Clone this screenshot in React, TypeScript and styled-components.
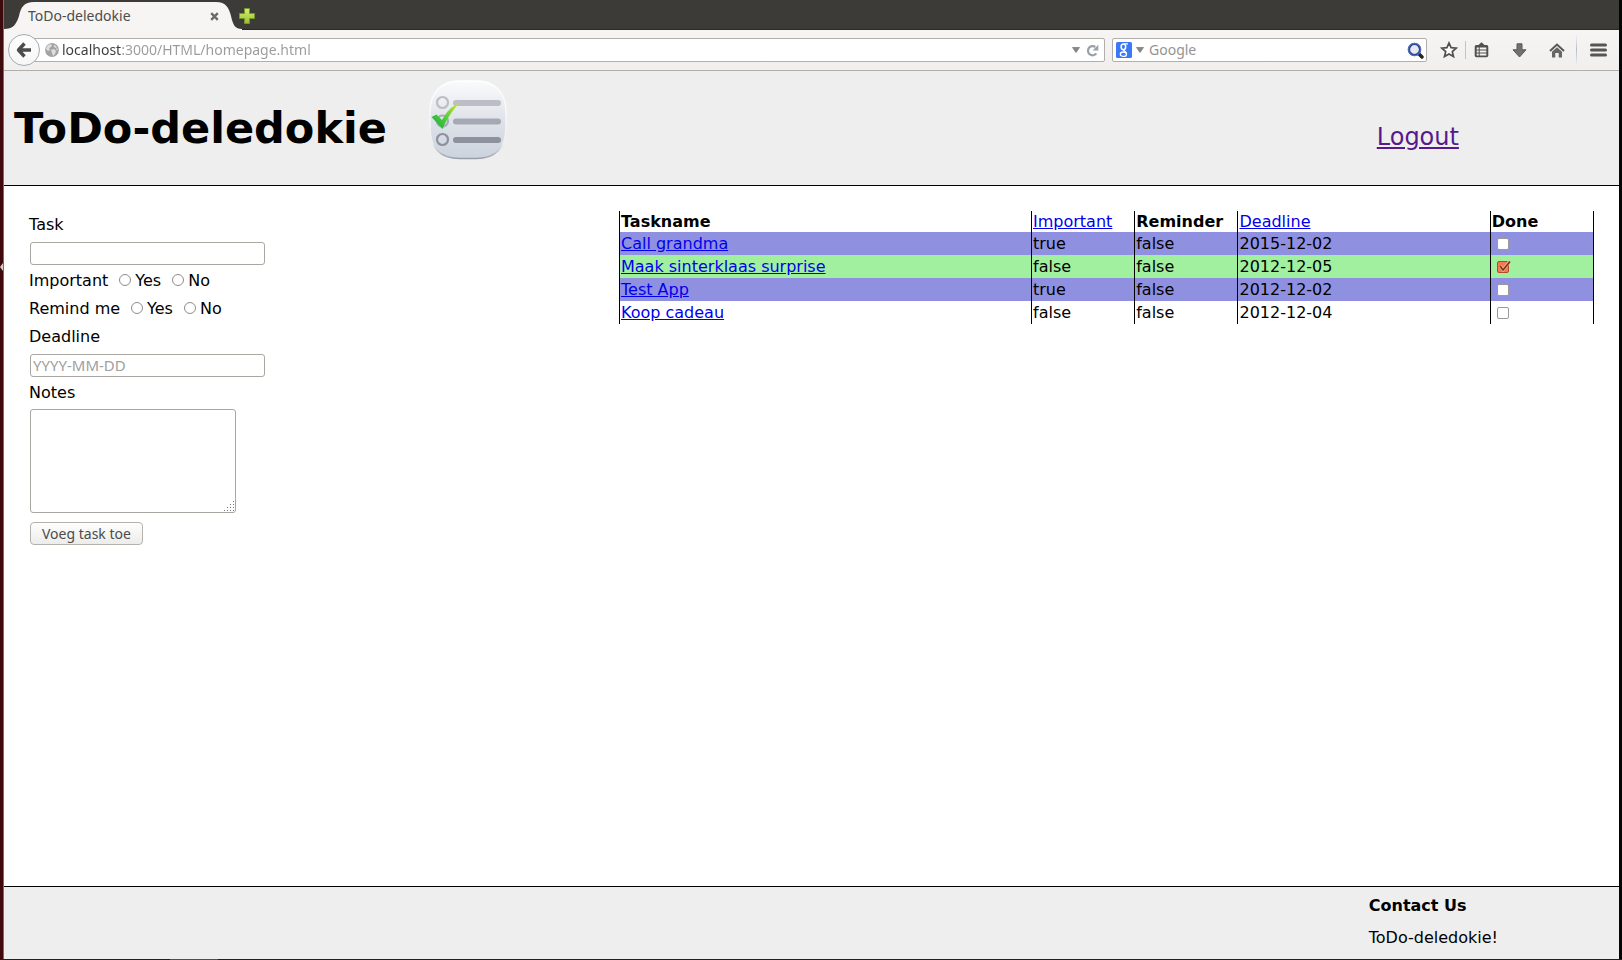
import React, { useState } from "react";
import styled, { createGlobalStyle } from "styled-components";

const GlobalStyle = createGlobalStyle`
  * { box-sizing: border-box; }
  body {
    margin: 0;
    background: #fff;
    color: #000;
    font: 16px/20px "DejaVu Sans", sans-serif;
  }
`;

const uiFont = `"Noto Sans", "Open Sans", sans-serif`;

const Desktop = styled.div`
  display: grid;
  grid-template-columns: 4px minmax(0, 1fr) 3px;
  grid-template-rows: minmax(0, 1fr) 1px;
  min-height: 100vh;
`;

const Launcher = styled.div`
  padding-top: 263px;
  background: #400a0c;
  border-right: 1px solid #a45a5c;

  svg { display: block; }
`;

const RightEdge = styled.div`
  background: #050505;
`;

const BottomEdge = styled.div`
  grid-column: 1 / -1;
  background: linear-gradient(90deg, #45100f 170px, #8a3a20 170px, #8a3a20 218px, #45100f 218px);
`;

const Browser = styled.div`
  display: flex;
  flex-direction: column;
  background: #fff;
`;

const TabBar = styled.div`
  display: flex;
  align-items: stretch;
  height: 30px;
  background: #3c3b37;
  box-shadow: inset 0 -1px #2a2926;
`;

const Tab = styled.div`
  position: relative;
  display: flex;
  align-items: center;
  justify-content: space-between;
  width: 238px;
  margin-right: -3px;
  padding: 2px 23px 0 24px;
  color: #4c4c4c;
  font: 14px/20px ${uiFont};
`;

const TabShape = styled.svg`
  position: absolute;
  inset: 0;
`;

const TabTitle = styled.span`
  position: relative;
`;

const IconButton = styled.button<{ $w: number; $h?: number }>`
  position: relative;
  display: flex;
  align-items: center;
  justify-content: center;
  flex: none;
  width: ${(p) => p.$w}px;
  height: ${(p) => p.$h ?? 24}px;
  padding: 0;
  border: 0;
  background: none;
`;

const Toolbar = styled.div`
  display: flex;
  align-items: center;
  height: 41px;
  padding: 0 0 0 4px;
  background: linear-gradient(#f6f5f4, #f0efed);
  border-bottom: 1px solid #b2aeaa;
`;

const BackButton = styled.button`
  position: relative;
  display: flex;
  align-items: center;
  justify-content: center;
  flex: none;
  width: 32px;
  height: 32px;
  margin-right: -8px;
  padding: 0;
  border: 1px solid #a4abb6;
  border-radius: 50%;
  background: linear-gradient(#fdfdfd, #f6f6f6);
`;

const UrlBox = styled.div`
  display: flex;
  align-items: center;
  flex: 1;
  height: 24px;
  padding: 0 4px 0 12px;
  border: 1px solid #b2aeaa;
  border-radius: 2px;
  background: #fff;
`;

const UrlInput = styled.input`
  flex: 1;
  min-width: 0;
  height: 20px;
  margin-left: 3px;
  padding: 0;
  border: 0;
  outline: 0;
  background: linear-gradient(90deg, #3c3c3c 60px, #9a9a9a 60px);
  background-clip: text;
  -webkit-text-fill-color: transparent;
  font: 14px/20px ${uiFont};
`;

const SearchBox = styled.div`
  display: flex;
  align-items: center;
  width: 315px;
  height: 24px;
  margin-left: 7px;
  padding: 0 2px 0 3px;
  border: 1px solid #b2aeaa;
  border-radius: 2px;
  background: #fff;
`;

const SearchInput = styled.input`
  flex: 1;
  min-width: 0;
  height: 20px;
  padding: 0 1px;
  border: 0;
  outline: 0;
  background: none;
  font: 14px/20px ${uiFont};

  &::placeholder { color: #949494; opacity: 1; }
`;

const Tools = styled.div`
  display: flex;
  align-items: center;
  margin-left: 10px;
`;

const Divider = styled.span<{ $tall?: boolean }>`
  width: 1px;
  height: ${(p) => (p.$tall ? 32 : 18)}px;
  margin-left: 4px;
  background: ${(p) =>
    p.$tall ? "linear-gradient(transparent, #b4bfcd, transparent)" : "#bcc6d1"};
`;

const Header = styled.header`
  position: relative;
  display: flex;
  align-items: center;
  height: 115px;
  padding: 0 10px;
  background: #eee;
  border-bottom: 1px solid #000;
`;

const Title = styled.h1`
  margin: 0;
  font-size: 43px;
  line-height: 52px;
`;

const Logo = styled.svg`
  flex: none;
  margin: 0 0 17px 42px;
`;

const LogoutSlot = styled.div`
  position: absolute;
  left: 85%;
  top: 51px;
  font-size: 24px;
  line-height: 30px;
`;

const Link = styled.a<{ $visited?: boolean }>`
  color: ${(p) => (p.$visited ? "#551a8b" : "#0000ee")};
`;

const Main = styled.main`
  display: grid;
  grid-template-columns: 590fr 975fr;
  align-items: start;
  flex: 1;
  padding: 25px;
`;

const Form = styled.form`
  display: flex;
  flex-direction: column;
  align-items: flex-start;
  line-height: 28px;
`;

const Row = styled.div`
  display: flex;
  align-items: center;
  height: 28px;
`;

const fieldFrame = `
  border: 1px solid #aaa6a1;
  border-radius: 3px;
  background: #fff;
  font: 15px/20px ${uiFont};
`;

const TextInput = styled.input`
  width: 235px;
  height: 23px;
  margin-left: 1px;
  padding: 0 2px;
  ${fieldFrame}

  &::placeholder { color: #a0a0a0; opacity: 1; }
`;

const Choice = styled.label`
  display: flex;
  align-items: center;
  margin-left: 11px;
`;

const Radio = styled.input`
  appearance: none;
  width: 12px;
  height: 12px;
  margin: 0 4px 2px 0;
  border: 1px solid #8f8d89;
  border-radius: 50%;
  background: #fff;

  &:checked { background: radial-gradient(#e2562b 3px, #fff 4px); }
`;

const NotesFrame = styled.div`
  position: relative;
  margin: 2px 0 9px 1px;
`;

const Notes = styled.textarea`
  display: block;
  width: 206px;
  height: 104px;
  padding: 2px;
  resize: none;
  ${fieldFrame}
`;

const Grip = styled.svg`
  position: absolute;
  right: 2px;
  bottom: 2px;
  pointer-events: none;
`;

const Submit = styled.button`
  height: 23px;
  margin-left: 1px;
  padding: 0 11px;
  border: 1px solid #b5b1ac;
  border-radius: 4px;
  background: linear-gradient(#fefefe, #ececeb);
  color: #4c4c4c;
  font: 14px/20px ${uiFont};
`;

const Table = styled.table`
  width: 100%;
  border-collapse: collapse;
  table-layout: fixed;
`;

const Col = styled.col<{ $share: number }>`
  width: ${(p) => p.$share}%;
`;

const HeadCell = styled.th<{ $plain?: boolean }>`
  height: 21px;
  padding: 0 1px;
  border: solid #000;
  border-width: 0 1px;
  text-align: left;
  font-weight: ${(p) => (p.$plain ? 400 : 700)};
`;

const TaskRow = styled.tr<{ $tone: string }>`
  background: ${(p) => p.$tone};
`;

const Cell = styled.td`
  height: 23px;
  padding: 0 1px;
  border: solid #000;
  border-width: 0 1px;
`;

const CheckFrame = styled.label`
  position: relative;
  display: block;
  width: 12px;
  height: 12px;
  margin-left: 5px;

  svg {
    position: absolute;
    left: 0;
    top: -1px;
    pointer-events: none;
  }
`;

const Checkbox = styled.input`
  appearance: none;
  display: block;
  width: 12px;
  height: 12px;
  margin: 0;
  border: 1px solid #9c9a96;
  border-radius: 2px;
  background: #fff;

  &:checked { border-color: #b54a26; background: #f7784c; }
`;

const Footer = styled.footer`
  height: 73px;
  padding: 9px 0 0 calc(85% - 8px);
  background: #eee;
  border-top: 1px solid #000;
`;

const FooterLine = styled.p<{ $strong?: boolean }>`
  margin: 0 0 12px;
  font-weight: ${(p) => (p.$strong ? 700 : 400)};
`;

const DownArrow = () => (
  <svg width="8" height="6" viewBox="0 0 8 6">
    <path d="M0.5 0.5h7L4 5.6z" fill="#888" stroke="#666" strokeWidth=".6" />
  </svg>
);

const BackIcon = () => (
  <svg width="16" height="16" viewBox="0 0 16 16">
    <path d="M8.5 1.5L2.5 8l6 6.500M3 8h12" fill="none" stroke="#4b4b4b" strokeWidth="3.400" strokeLinejoin="round" />
  </svg>
);

const GlobeIcon = () => (
  <svg width="14" height="14" viewBox="0 0 14 14">
    <circle cx="7" cy="7" r="6.900" fill="#a3a3a3" />
    <path d="M2 3l3-2 2 1-1 2-2 1 1 2-2 1-2-2zM9 1.500l3 2.500-1 1-2-1zM6 7l3-1 2 2-1 3-2 2-1-3zM11 5l2 1-1 2z" fill="#dedede" />
  </svg>
);

const ReloadIcon = () => (
  <svg width="13" height="13" viewBox="0 0 13 13">
    <path d="M10.300 9.400A4.600 4.600 0 1 1 9.300 3" fill="none" stroke="#98a0a8" strokeWidth="2.200" />
    <path d="M12.300 .8v5.700H6.600z" fill="#98a0a8" />
  </svg>
);

const GoogleIcon = () => (
  <svg width="16" height="16" viewBox="0 0 16 16">
    <rect width="16" height="16" rx="1.500" fill="#3b78f5" />
    <ellipse cx="7.400" cy="4.800" rx="2.300" ry="2.900" fill="none" stroke="#fff" strokeWidth="1.500" />
    <path d="M8 1.800h4M8.600 7.700c-2.300 1 .9 1.500 1.700 3.200" fill="none" stroke="#fff" strokeWidth="1.300" />
    <ellipse cx="7.400" cy="12.200" rx="3.100" ry="2.200" fill="none" stroke="#fff" strokeWidth="1.300" />
  </svg>
);

const MagnifierIcon = () => (
  <svg width="17" height="17" viewBox="0 0 17 17">
    <path d="M11 11l4 4" stroke="#222" strokeWidth="3.400" strokeLinecap="round" />
    <circle cx="7.500" cy="7.500" r="5.600" fill="#e6e9ef" stroke="#2c4795" strokeWidth="2.400" />
    <circle cx="7.500" cy="7.500" r="6.200" fill="none" stroke="#5f80cc" strokeWidth=".8" />
  </svg>
);

const StarIcon = () => (
  <svg width="18" height="18" viewBox="0 0 18 18">
    <path d="M9 2l2.100 4.700 5.100.5-3.900 3.400 1.200 5L9 13l-4.500 2.600 1.200-5L1.800 7.200l5.100-.5z" fill="#fcfcfc" stroke="#505050" strokeWidth="1.700" />
  </svg>
);

const ClipboardIcon = () => (
  <svg width="15" height="16" viewBox="0 0 15 16">
    <path d="M2.500 3H4.500L7.500.3 10.500 3h2A1.800 1.800 0 0 1 14.300 5v8.500a1.800 1.800 0 0 1-1.800 1.800h-10A1.800 1.800 0 0 1 .7 13.500V5A1.800 1.800 0 0 1 2.500 3z" fill="#505050" />
    <path d="M2.700 5.500h2v2h-2zM5.700 5.500h6.600v2H5.700zM2.700 8.500h2v2h-2zM5.700 8.500h6.600v2H5.700zM2.700 11.500h2v2h-2zM5.700 11.500h6.600v2H5.700z" fill="#f3f3f3" />
  </svg>
);

const DownloadIcon = () => (
  <svg width="15" height="15" viewBox="0 0 15 15">
    <path d="M5 .8h5v6h4L7.500 14 1 6.800h4z" fill="#707070" stroke="#585858" strokeLinejoin="round" />
  </svg>
);

const HomeIcon = () => (
  <svg width="16" height="15" viewBox="0 0 16 15">
    <path d="M1 8l7-6.500L15 8" fill="none" stroke="#585858" strokeWidth="2" />
    <path d="M3 8.800l5-4.600 5 4.600V14.500H9.700V10H6.300v4.500H3z" fill="#666" />
  </svg>
);

const MenuIcon = () => (
  <svg width="17" height="14" viewBox="0 0 17 14">
    <path d="M1.500 2h14M1.500 7h14M1.500 12h14" stroke="#555" strokeWidth="3" strokeLinecap="round" />
  </svg>
);

const PlusIcon = () => (
  <svg width="16" height="16" viewBox="0 0 16 16">
    <defs>
      <linearGradient id="plus" x2="0" y2="1">
        <stop offset="0" stopColor="#d5ec72" />
        <stop offset="1" stopColor="#9dbf30" />
      </linearGradient>
    </defs>
    <path d="M5.500 .5h5v5h5v5h-5v5h-5v-5h-5v-5h5z" fill="url(#plus)" stroke="#739929" />
  </svg>
);

const CloseIcon = () => (
  <svg width="9" height="9" viewBox="0 0 9 9">
    <path d="M1.200 1.200l6.600 6.600M7.800 1.200L1.200 7.800" stroke="#6b6b6b" strokeWidth="2.400" />
  </svg>
);

const TodoLogo = () => (
  <Logo width="78" height="80" viewBox="0 0 78 80" role="img" aria-label="Checklist">
    <defs>
      <linearGradient id="tile" x2="0" y2="1">
        <stop offset="0" stopColor="#fafbfc" />
        <stop offset=".5" stopColor="#dfe2e9" />
        <stop offset="1" stopColor="#ccd3de" />
      </linearGradient>
      <linearGradient id="rim" x2="0" y2="1">
        <stop offset="0" stopColor="#fff" />
        <stop offset=".8" stopColor="#edf0f4" />
        <stop offset="1" stopColor="#989da8" />
      </linearGradient>
      <linearGradient id="tick" x1="1" x2="0" y2="1">
        <stop offset="0" stopColor="#d2e62c" />
        <stop offset=".6" stopColor="#44cb38" />
        <stop offset="1" stopColor="#18a544" />
      </linearGradient>
    </defs>
    <path d="M31 1h16C68 1 77 14 77 33v14C77 68 66 78.500 47 78.500H31C10 78.500 1 68 1 47V33C1 14 10 1 31 1z" fill="url(#tile)" stroke="url(#rim)" strokeWidth="1.500" />
    <g fill="none" strokeWidth="2.200">
      <circle cx="13.500" cy="22.500" r="5.500" stroke="#bcbec7" />
      <circle cx="13.500" cy="41" r="5.500" stroke="#a8abb6" />
      <circle cx="13.500" cy="59.500" r="5.500" stroke="#8d919d" />
    </g>
    <g strokeWidth="6" strokeLinecap="round">
      <path d="M27 23h42" stroke="#bcbec7" />
      <path d="M27 41.500h42" stroke="#a6a9b4" />
      <path d="M27 60h42" stroke="#8d919d" />
    </g>
    <path d="M2.500 37l5-2.500 5.500 5.500C17 33 22 26 31 23c-8 7-13 16-17.500 26z" fill="url(#tick)" />
  </Logo>
);

const tasks = [
  { name: "Call grandma", important: true, reminder: false, deadline: "2015-12-02", done: false },
  { name: "Maak sinterklaas surprise", important: false, reminder: false, deadline: "2012-12-05", done: true },
  { name: "Test App", important: true, reminder: false, deadline: "2012-12-02", done: false },
  { name: "Koop cadeau", important: false, reminder: false, deadline: "2012-12-04", done: false },
];

const toneOf = (done: boolean, important: boolean) =>
  done ? "#a0f0a0" : important ? "#9090e0" : "#fff";

function YesNo({ label, name }: { label: string; name: string }) {
  return (
    <Row role="radiogroup" aria-label={label}>
      <span>{label}</span>
      {["Yes", "No"].map((option) => (
        <Choice key={option}>
          <Radio type="radio" name={name} value={option} />
          {option}
        </Choice>
      ))}
    </Row>
  );
}

function TaskForm() {
  return (
    <Form onSubmit={(e) => e.preventDefault()}>
      <label htmlFor="task">Task</label>
      <Row><TextInput id="task" type="text" /></Row>
      <YesNo label="Important" name="important" />
      <YesNo label="Remind me" name="remind" />
      <label htmlFor="deadline">Deadline</label>
      <Row><TextInput id="deadline" type="text" placeholder="YYYY-MM-DD" /></Row>
      <label htmlFor="notes">Notes</label>
      <NotesFrame>
        <Notes id="notes" />
        <Grip width="10" height="10" viewBox="0 0 10 10" fill="#777">
          <path d="M9 0h1v1H9zM6 3h1v1H6zM9 3h1v1H9zM3 6h1v1H3zM6 6h1v1H6zM9 6h1v1H9zM0 9h1v1H0zM3 9h1v1H3zM6 9h1v1H6zM9 9h1v1H9z" />
        </Grip>
      </NotesFrame>
      <Submit type="submit">Voeg task toe</Submit>
    </Form>
  );
}

function TaskTable() {
  const [done, setDone] = useState(tasks.map((t) => t.done));
  const toggle = (i: number) => setDone(done.map((d, j) => (j === i ? !d : d)));

  return (
    <Table>
      <colgroup>
        <Col $share={42.3} />
        <Col $share={10.6} />
        <Col $share={10.6} />
        <Col $share={25.9} />
        <Col $share={10.6} />
      </colgroup>
      <thead>
        <tr>
          <HeadCell>Taskname</HeadCell>
          <HeadCell $plain><Link href="#important">Important</Link></HeadCell>
          <HeadCell>Reminder</HeadCell>
          <HeadCell $plain><Link href="#deadline">Deadline</Link></HeadCell>
          <HeadCell>Done</HeadCell>
        </tr>
      </thead>
      <tbody>
        {tasks.map((task, i) => (
          <TaskRow key={task.name} $tone={toneOf(done[i], task.important)}>
            <Cell><Link href="#task">{task.name}</Link></Cell>
            <Cell>{String(task.important)}</Cell>
            <Cell>{String(task.reminder)}</Cell>
            <Cell>{task.deadline}</Cell>
            <Cell>
              <CheckFrame>
                <Checkbox
                  type="checkbox"
                  aria-label={`${task.name} done`}
                  checked={done[i]}
                  onChange={() => toggle(i)}
                />
                {done[i] && (
                  <svg width="14" height="12" viewBox="0 0 14 12">
                    <path d="M3 6l3 4 6.500-8.500" fill="none" stroke="#fbb08f" strokeWidth="3" />
                    <path d="M3 6l3 4 7-8.500" fill="none" stroke="#6b3527" strokeWidth="1.600" />
                  </svg>
                )}
              </CheckFrame>
            </Cell>
          </TaskRow>
        ))}
      </tbody>
    </Table>
  );
}

export default function App() {
  return (
    <Desktop>
      <GlobalStyle />
      <Launcher>
        <svg width="3" height="8" viewBox="0 0 3 8">
          <path d="M3 0v8L0 4z" fill="#d8d0d0" />
        </svg>
      </Launcher>
      <Browser>
        <TabBar>
          <Tab>
            <TabShape width="238" height="30" viewBox="0 0 238 30">
              <path d="M0 30V29C9 29 12 25 15 16 17 7 20 2 30 2H212C222 2 225 8 227 16 229 25 231 29 238 29V30z" fill="#f6f5f4" />
            </TabShape>
            <TabTitle>ToDo-deledokie</TabTitle>
            <IconButton $w={10} $h={12} aria-label="Close tab"><CloseIcon /></IconButton>
          </Tab>
          <IconButton $w={16} $h={32} aria-label="New tab"><PlusIcon /></IconButton>
        </TabBar>
        <Toolbar>
          <BackButton aria-label="Back"><BackIcon /></BackButton>
          <UrlBox>
            <GlobeIcon />
            <UrlInput aria-label="Address" defaultValue="localhost:3000/HTML/homepage.html" />
            <IconButton $w={16} aria-label="History"><DownArrow /></IconButton>
            <IconButton $w={16} aria-label="Reload"><ReloadIcon /></IconButton>
          </UrlBox>
          <SearchBox>
            <GoogleIcon />
            <IconButton $w={16} aria-label="Search engine"><DownArrow /></IconButton>
            <SearchInput aria-label="Search" placeholder="Google" />
            <IconButton $w={17} aria-label="Go"><MagnifierIcon /></IconButton>
          </SearchBox>
          <Tools>
            <IconButton $w={24} aria-label="Bookmark this page"><StarIcon /></IconButton>
            <Divider />
            <IconButton $w={30} aria-label="Bookmarks"><ClipboardIcon /></IconButton>
            <IconButton $w={46} aria-label="Downloads"><DownloadIcon /></IconButton>
            <IconButton $w={30} aria-label="Home"><HomeIcon /></IconButton>
            <Divider $tall />
            <IconButton $w={42} aria-label="Menu"><MenuIcon /></IconButton>
          </Tools>
        </Toolbar>

        <Header>
          <Title>ToDo-deledokie</Title>
          <TodoLogo />
          <LogoutSlot>
            <Link href="#logout" $visited>Logout</Link>
          </LogoutSlot>
        </Header>

        <Main>
          <TaskForm />
          <TaskTable />
        </Main>

        <Footer>
          <FooterLine $strong>Contact Us</FooterLine>
          <FooterLine>ToDo-deledokie!</FooterLine>
        </Footer>
      </Browser>
      <RightEdge />
      <BottomEdge />
    </Desktop>
  );
}
